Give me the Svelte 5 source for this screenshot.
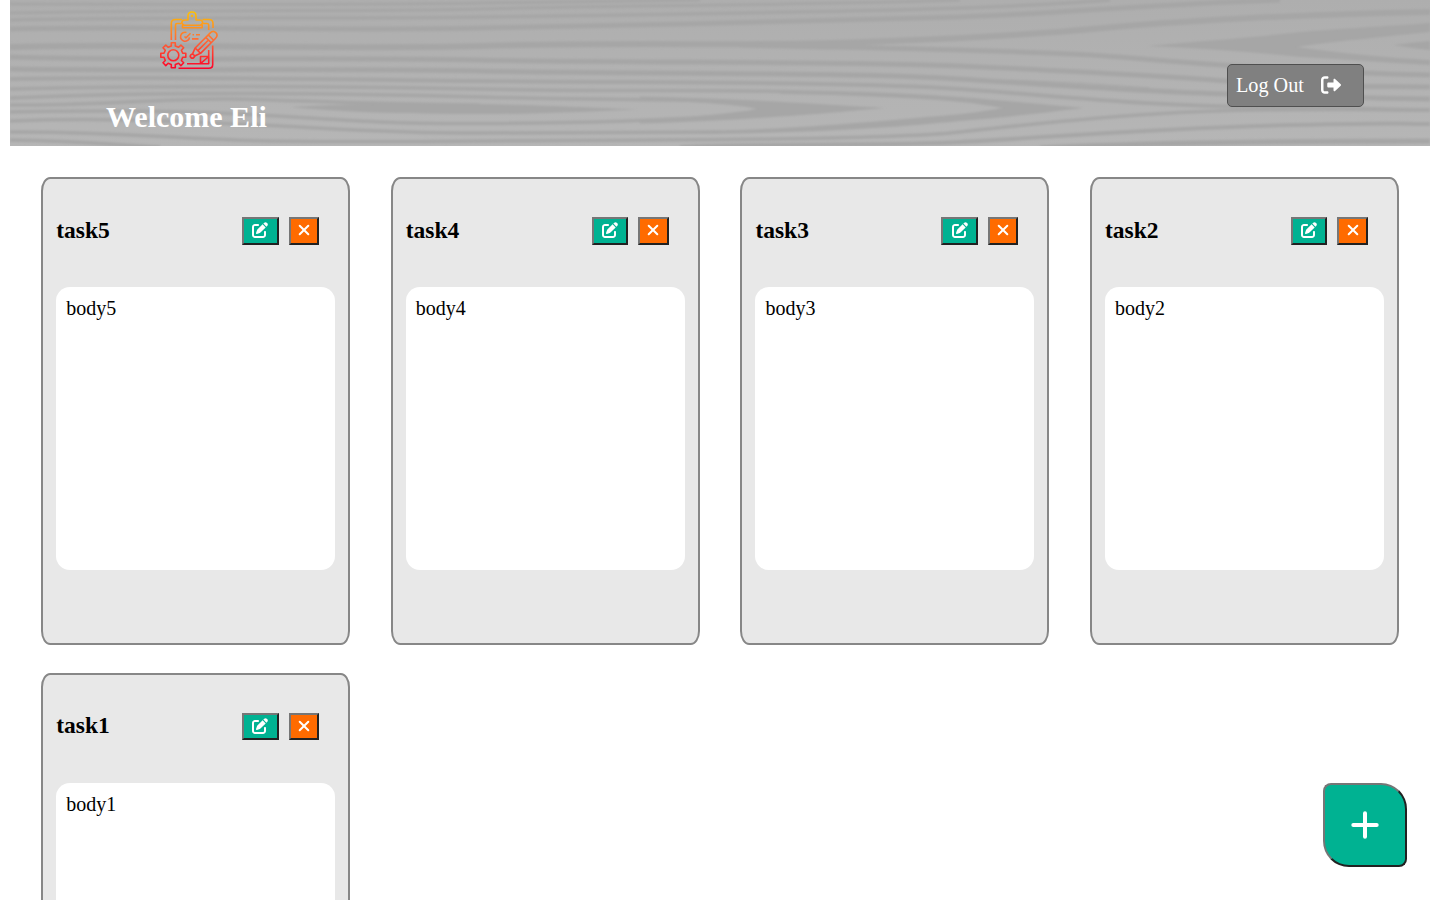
<script>
  const tasks = [5, 4, 3, 2, 1].map((n) => ({ title: `task${n}`, body: `body${n}` }));

  // Wood grain: stroke width and path of each vein
  const veins = [
    [3, 'M10 4C200 4 380 5 480 3S650 1 700 0'],
    [3, 'M10 13C200 9 380 12 480 9S820 5 960 0'],
    [3.5, 'M10 20C150 17 340 19 480 17S850 12 960 8S1080 2 1110 0'],
    [5, 'M10 29C150 26 340 31 480 28S850 21 960 17S1150 4 1280 0'],
    [6, 'M10 47C150 43 330 50 480 46S730 46 830 43S1040 34 1103 28S1300 14 1430 12'],
    [5, 'M740 45C860 48 1040 50 1120 57S1300 72 1430 75'],
    [5, 'M10 57C150 61 330 57 480 60S850 61 960 66S1150 75 1227 81S1350 86 1430 87'],
    [5, 'M10 69C150 71 330 68 480 71S850 72 960 79S1150 92 1227 94S1350 98 1430 99'],
    [4, 'M10 79C150 76 330 79 480 81S850 81 960 89S1150 106 1260 107S1380 110 1430 110'],
    [3.5, 'M10 89C150 86 330 86 480 89S700 89 800 92'],
    [3.5, 'M10 98C150 92 330 93 480 97S660 98 730 102'],
    [3.5, 'M10 105C110 106 160 98 230 99S340 104 480 105'],
    [3.5, 'M10 112C110 110 190 111 260 115S380 124 480 123.500S650 121 710 117'],
    [3.5, 'M10 121C110 117 190 122 260 125S380 133 480 133S660 133 720 132'],
    [3.5, 'M10 132C110 131 190 140 270 141S380 142 480 141S880 141 960 132S1150 111 1260 110S1380 110 1430 110'],
    [3.5, 'M10 140C80 141 120 145 160 147'],
    [4, 'M680 147C800 143 880 146 960 142S1150 128 1293 125S1390 124 1430 124'],
    [5, 'M1040 148C1140 143 1260 141 1430 141'],
    [1, 'M1010 80C1060 82 1100 84 1150 88']
  ];

  const knots = [
    'M290 107C350 103 400 104 480 104C540 105 600 108 637 109.500C580 112 540 114 480 114C400 114 340 112 290 107Z',
    'M640 96.500C720 98 810 103 885 108C840 112 770 119 640 123.500V120.500C700 117 740 112 757 109C740 105 700 102 640 99Z',
    'M780 90C860 91 920 94 960 97C1010 101 1050 105 1084 108C1050 112 1000 118 960 121C900 127 820 133 700 134V131C800 129 880 121 950 115C975 113 990 110 1003 108C990 106 975 103 960 102C920 98 850 95 780 94Z',
    'M1147 46C1200 41 1250 38 1290 33C1330 29 1390 26 1430 23V32C1390 36 1330 42 1297 47C1340 53 1390 58 1430 60V65C1380 62 1350 60 1300 57C1250 52 1200 48 1147 46Z',
    'M1393 45Q1415 42 1430 41V50Q1410 48 1393 45Z'
  ];
</script>

{#snippet edit()}
  <svg class="edit-icon" viewBox="0 0 512 512" aria-hidden="true">
    <path d="M471.600 21.700c-21.900-21.900-57.300-21.900-79.200 0L362.300 51.700l97.900 97.900 30.100-30.100c21.900-21.900 21.900-57.300 0-79.200L471.600 21.700zm-299.200 220c-6.100 6.100-10.800 13.600-13.500 21.900l-29.600 88.800c-2.900 8.600-.6 18.100 5.800 24.600s15.900 8.700 24.600 5.800l88.800-29.600c8.200-2.700 15.700-7.400 21.900-13.500L437.700 172.300 339.700 74.300 172.400 241.700zM96 64C43 64 0 107 0 160V416c0 53 43 96 96 96H352c53 0 96-43 96-96V320c0-17.700-14.300-32-32-32s-32 14.300-32 32v96c0 17.700-14.300 32-32 32H96c-17.700 0-32-14.300-32-32V160c0-17.700 14.300-32 32-32h96c17.700 0 32-14.300 32-32s-14.300-32-32-32H96z" />
  </svg>
{/snippet}

{#snippet flameStops()}
  <stop stop-color="#ffc400" /><stop offset=".5" stop-color="#ff6a35" /><stop offset="1" stop-color="#ff0028" />
{/snippet}

<header>
  <svg class="wood" viewBox="10 0 1420 146" preserveAspectRatio="none" aria-hidden="true">
    <defs>
      <linearGradient id="base" x2="0" y2="1">
        <stop stop-color="#aeaeae" /><stop offset="1" stop-color="#b6b6b6" />
      </linearGradient>
      <filter id="soft" x="-2%" y="-10%" width="104%" height="120%"><feGaussianBlur stdDeviation=".8" /></filter>
    </defs>
    <rect x="10" width="1420" height="146" fill="url(#base)" />
    <g filter="url(#soft)">
      {#each veins as [width, d]}
        <path {d} fill="none" stroke="#a6a6a6" stroke-width={width} />
      {/each}
      {#each knots as d}
        <path {d} fill="#a6a6a6" />
      {/each}
    </g>
  </svg>

  <div class="brand">
    <svg class="logo" viewBox="0 0 60 60" aria-hidden="true">
      <defs>
        <linearGradient id="flame" gradientUnits="userSpaceOnUse" x1="0" y1="1" x2="0" y2="59">
          {@render flameStops()}
        </linearGradient>
        <linearGradient id="flame-tilted" gradientUnits="userSpaceOnUse" x1="32.500" y1="-32.500" x2="-8.500" y2="8.500">
          {@render flameStops()}
        </linearGradient>
      </defs>
      <g fill="none" stroke="url(#flame)" stroke-width="1.600" stroke-linejoin="round">
        <path d="M12.300 30V13.500q0-4 4-4H23M16.500 30V15q0-1.500 1.500-1.500h4.500M43.500 9.500H50q4 0 4 4V18M44 13.500h4q1.700 0 1.700 1.700V20" />
        <path d="M22.800 13v0q0-3 3-3h3.200V6q0-4 4-4t4 4v4h3.700q3 0 3 3v0l-2.200 2.300H25zM23.500 14.500v3.300h19.700v-3.300" />
        <circle cx="33" cy="6" r=".5" />
        <path d="M27.500 22.500a4.500 4.500 0 1 0 3 4.800M25.500 26.500l1.500 1.300 4.500-4.600M33.500 24.700h1.500M37 24.700h4M33 28.900h6.500" />
        <g transform="translate(32.500 47) rotate(-45)" stroke="url(#flame-tilted)">
          <circle cx="1.200" cy="0" r="2" />
          <path d="M3-1.500 9-3.800H30q4.400 0 4.400 3.800T30 3.800H9L3 1.500M9-3.800v7.600M24-3.800v7.600M27.500-3.800v7.600M9 0h15" />
        </g>
        <path d="M53.700 35.500V54.500q0 3.800-3.800 3.800H19.500M49.700 40v13.700H28M41.500 53.700v-7.200h8.200M41.500 53.700l8.200-7.200" />
        <circle cx="14.300" cy="45.300" r="5.500" />
        <path transform="translate(.8 -.2)" d="M11.500 33h4v3.200l3.300 1.300 2.300-2.300 2.800 2.800-2.300 2.400 1.300 3.100H26v4h-3.100l-1.300 3.200 2.300 2.300-2.800 2.800-2.300-2.300-3.300 1.300V58h-4v-3.200l-3.200-1.300L6 55.800 3.200 53l2.300-2.300-1.300-3.200H1v-4h3.200l1.300-3.100L3.200 38 6 35.200l2.300 2.300 3.200-1.300z" />
      </g>
    </svg>
    <h1>Welcome Eli</h1>
  </div>

  <button class="logout">
    Log Out
    <svg viewBox="0 0 512 512" aria-hidden="true">
      <path d="M160 96c17.700 0 32-14.300 32-32s-14.300-32-32-32H96C43 32 0 75 0 128V384c0 53 43 96 96 96h64c17.700 0 32-14.300 32-32s-14.300-32-32-32H96c-17.700 0-32-14.300-32-32V128c0-17.700 14.300-32 32-32h64zM504.500 273.400c4.800-4.500 7.500-10.800 7.500-17.400s-2.700-12.900-7.500-17.400l-144-136c-7-6.600-17.200-8.400-26-4.600s-14.500 12.400-14.500 22v72H192c-17.700 0-32 14.300-32 32v64c0 17.700 14.300 32 32 32H320v72c0 9.600 5.700 18.200 14.500 22s19 2 26-4.600l144-136z" />
    </svg>
  </button>
</header>

<main>
  {#each tasks as task}
    <article>
      <div class="heading">
        <h2>{task.title}</h2>
        <button class="edit" aria-label="Edit">{@render edit()}</button>
        <button class="remove" aria-label="Delete">
          <svg viewBox="0 0 12 12" aria-hidden="true"><path d="m1.700 1.700 8.600 8.600m0-8.600-8.600 8.600" /></svg>
        </button>
      </div>
      <div class="body">{task.body}</div>
    </article>
  {/each}
</main>

<button class="add" aria-label="Add">
  <svg viewBox="0 0 28 28" aria-hidden="true"><path d="M14 2.300v23.400M2.300 14h23.400" /></svg>
</button>

<style>
  :global(html) { overflow: hidden; }
  :global(body) {
    margin: 0;
    height: 900px;
    overflow: hidden;
    background: #fff;
    color: #000;
    font-family: "Liberation Serif", "Times New Roman", serif;
  }
  header {
    position: relative;
    display: flex;
    justify-content: space-between;
    align-items: flex-start;
    box-sizing: border-box;
    height: 146px;
    margin: 0 10px;
    padding: 0 66px 0 96px;
  }
  .wood { position: absolute; inset: 0; width: 100%; height: 100%; }
  .brand {
    position: relative;
    display: flex;
    flex-direction: column;
    padding-top: 10px;
  }
  .logo { width: 60px; height: 60px; margin-left: 53px; }
  h1 {
    margin: 30px 0 0;
    color: #fff;
    font-size: 30px;
    line-height: 34px;
    white-space: nowrap;
  }
  button {
    box-sizing: border-box;
    display: flex;
    align-items: center;
    justify-content: center;
    padding: 0;
    font-family: inherit;
  }
  .logout {
    position: relative;
    justify-content: flex-start;
    width: 137px;
    height: 43px;
    margin-top: 64px;
    padding: 0 0 0 8px;
    gap: 17px;
    border: 1px solid #4f4f4f;
    border-radius: 5px;
    background: #808080;
    color: #fff;
    font-size: 20.200px;
  }
  .logout svg { width: 20px; height: 20px; margin-top: -2px; fill: #fff; }
  main {
    display: grid;
    grid-template-columns: repeat(4, 309px);
    column-gap: 40.600px;
    row-gap: 27.600px;
    box-sizing: border-box;
    height: 754px;
    padding: 31.200px 0 0 41.200px;
    overflow: hidden;
  }
  article {
    box-sizing: border-box;
    height: 468px;
    padding: 0 13px;
    border: 2px solid #878787;
    border-radius: 3%;
    background: #e8e8e8;
  }
  .heading {
    display: flex;
    align-items: center;
    height: 108px;
    padding-right: 16.100px;
  }
  h2 { flex: 1; margin: 0 0 7px; font-size: 23.500px; line-height: 28px; }
  .edit, .remove {
    height: 27.500px;
    margin-bottom: 4.500px;
    border: 2px solid;
    border-color: #767676 #212121 #212121 #767676;
  }
  .edit { width: 36.500px; background: #00b292; }
  .remove { width: 30.500px; margin-left: 10px; background: #ff6b00; }
  .edit-icon { width: 16px; height: 16px; margin-bottom: 1.500px; fill: #fff; }
  .remove svg { width: 12px; height: 12px; margin: 0 0 2px 0; fill: none; stroke: #fff; stroke-width: 2; stroke-linecap: round; }
  .body {
    box-sizing: border-box;
    height: 283px;
    padding: 10px;
    border-radius: 14px;
    background: #fff;
    font-size: 20px;
    line-height: 23px;
  }
  .add {
    position: fixed;
    right: 33px;
    bottom: 33px;
    width: 84px;
    height: 84px;
    border: 2px solid;
    border-color: #767676 #212121 #212121 #767676;
    border-radius: 8px 26px 8px 26px;
    background: #00b292;
  }
  .add svg { width: 28px; height: 28px; fill: none; stroke: #fff; stroke-width: 4; stroke-linecap: round; }
</style>
